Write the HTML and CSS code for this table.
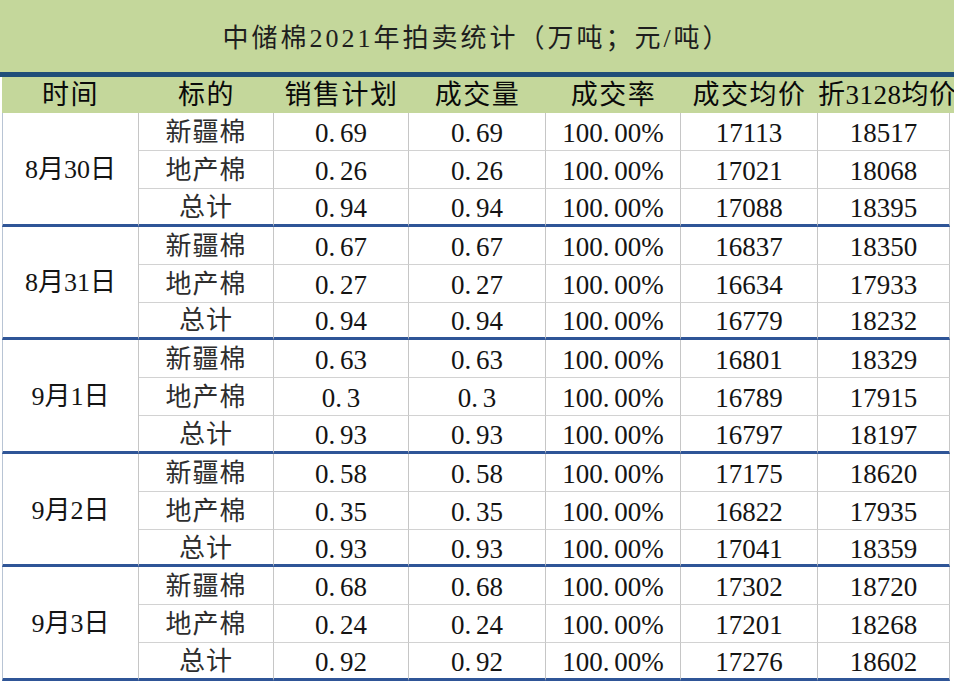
FILE: index.html
```html
<!DOCTYPE html>
<html lang="zh">
<head>
<meta charset="utf-8">
<title>中储棉2021年拍卖统计</title>
<link rel="stylesheet" href="styles.css">
</head>
<body>
<div class="title">中储棉2021年拍卖统计（万吨；元/吨）</div>
<table class="sheet">
<colgroup>
<col class="c1"><col class="c2"><col class="c3"><col class="c4"><col class="c5"><col class="c6"><col class="c7">
</colgroup>
<thead>
<tr><th>时间</th><th>标的</th><th>销售计划</th><th>成交量</th><th>成交率</th><th>成交均价</th><th class="last">折3128均价</th></tr>
</thead>
<tbody>
<tr><td class="date" rowspan="3">8月30日</td><td class="name">新疆棉</td><td>0<span class="p">.</span>69</td><td>0<span class="p">.</span>69</td><td>100<span class="p">.</span>00%</td><td>17113</td><td>18517</td></tr>
<tr><td class="name">地产棉</td><td>0<span class="p">.</span>26</td><td>0<span class="p">.</span>26</td><td>100<span class="p">.</span>00%</td><td>17021</td><td>18068</td></tr>
<tr class="end"><td class="name">总计</td><td>0<span class="p">.</span>94</td><td>0<span class="p">.</span>94</td><td>100<span class="p">.</span>00%</td><td>17088</td><td>18395</td></tr>

<tr><td class="date" rowspan="3">8月31日</td><td class="name">新疆棉</td><td>0<span class="p">.</span>67</td><td>0<span class="p">.</span>67</td><td>100<span class="p">.</span>00%</td><td>16837</td><td>18350</td></tr>
<tr><td class="name">地产棉</td><td>0<span class="p">.</span>27</td><td>0<span class="p">.</span>27</td><td>100<span class="p">.</span>00%</td><td>16634</td><td>17933</td></tr>
<tr class="end"><td class="name">总计</td><td>0<span class="p">.</span>94</td><td>0<span class="p">.</span>94</td><td>100<span class="p">.</span>00%</td><td>16779</td><td>18232</td></tr>

<tr><td class="date" rowspan="3">9月1日</td><td class="name">新疆棉</td><td>0<span class="p">.</span>63</td><td>0<span class="p">.</span>63</td><td>100<span class="p">.</span>00%</td><td>16801</td><td>18329</td></tr>
<tr><td class="name">地产棉</td><td>0<span class="p">.</span>3</td><td>0<span class="p">.</span>3</td><td>100<span class="p">.</span>00%</td><td>16789</td><td>17915</td></tr>
<tr class="end"><td class="name">总计</td><td>0<span class="p">.</span>93</td><td>0<span class="p">.</span>93</td><td>100<span class="p">.</span>00%</td><td>16797</td><td>18197</td></tr>

<tr><td class="date" rowspan="3">9月2日</td><td class="name">新疆棉</td><td>0<span class="p">.</span>58</td><td>0<span class="p">.</span>58</td><td>100<span class="p">.</span>00%</td><td>17175</td><td>18620</td></tr>
<tr><td class="name">地产棉</td><td>0<span class="p">.</span>35</td><td>0<span class="p">.</span>35</td><td>100<span class="p">.</span>00%</td><td>16822</td><td>17935</td></tr>
<tr class="end"><td class="name">总计</td><td>0<span class="p">.</span>93</td><td>0<span class="p">.</span>93</td><td>100<span class="p">.</span>00%</td><td>17041</td><td>18359</td></tr>

<tr><td class="date" rowspan="3">9月3日</td><td class="name">新疆棉</td><td>0<span class="p">.</span>68</td><td>0<span class="p">.</span>68</td><td>100<span class="p">.</span>00%</td><td>17302</td><td>18720</td></tr>
<tr><td class="name">地产棉</td><td>0<span class="p">.</span>24</td><td>0<span class="p">.</span>24</td><td>100<span class="p">.</span>00%</td><td>17201</td><td>18268</td></tr>
<tr class="end"><td class="name">总计</td><td>0<span class="p">.</span>92</td><td>0<span class="p">.</span>92</td><td>100<span class="p">.</span>00%</td><td>17276</td><td>18602</td></tr>
</tbody>
</table>
</body>
</html>
```
FILE: styles.css
```css
html, body {
  margin: 0;
  padding: 0;
}
body {
  width: 954px;
  height: 682px;
  overflow: hidden;
  background: #ffffff;
  font-family: "Liberation Serif", "Noto Sans CJK SC", serif;
  color: #151515;
}
.title {
  height: 66px;
  padding-top: 6px;
  background: #c4d79b;
  border-bottom: 5px solid #1f4e79;
  display: flex;
  align-items: center;
  justify-content: center;
  font-size: 26px;
  letter-spacing: 3px;
  line-height: 30px;
  color: #1e1e1e;
}
.sheet {
  margin-left: 2px;
  width: 948px;
  table-layout: fixed;
  border-collapse: separate;
  border-spacing: 0;
}
.c1 { width: 137px; }
.c2 { width: 135px; }
.c3 { width: 135px; }
.c4 { width: 137px; }
.c5 { width: 135px; }
.c6 { width: 137px; }
.c7 { width: 132px; }

.sheet th {
  height: 36px;
  padding: 0;
  background: #c4d79b;
  font-size: 27px;
  font-weight: 400;
  letter-spacing: 1.5px;
  line-height: 30px;
  color: #0a0a0a;
  text-align: center;
  white-space: nowrap;
}
.sheet th.last {
  text-align: left;
  overflow: visible;
  letter-spacing: 0.5px;
  box-shadow: 6px 0 0 #c4d79b;
}
.sheet td {
  box-sizing: border-box;
  height: 38px;
  padding: 3px 0 0;
  border-right: 1px solid #c6c6c6;
  border-bottom: 1px solid #d2d2d2;
  text-align: center;
  vertical-align: middle;
  font-size: 27px;
  line-height: 30px;
  white-space: nowrap;
  color: #141414;
}
.sheet tr.end td,
.sheet td.date {
  height: 37.6px;
  border-bottom: 3px solid #2f5597;
}
.sheet td.date {
  border-left: 1px solid #b8c4d4;
  font-size: 26px;
}
.sheet td.name {
  font-size: 26px;
  color: #2e2e2e;
  letter-spacing: 1px;
}
.p {
  margin-right: 0.18em;
}
```
